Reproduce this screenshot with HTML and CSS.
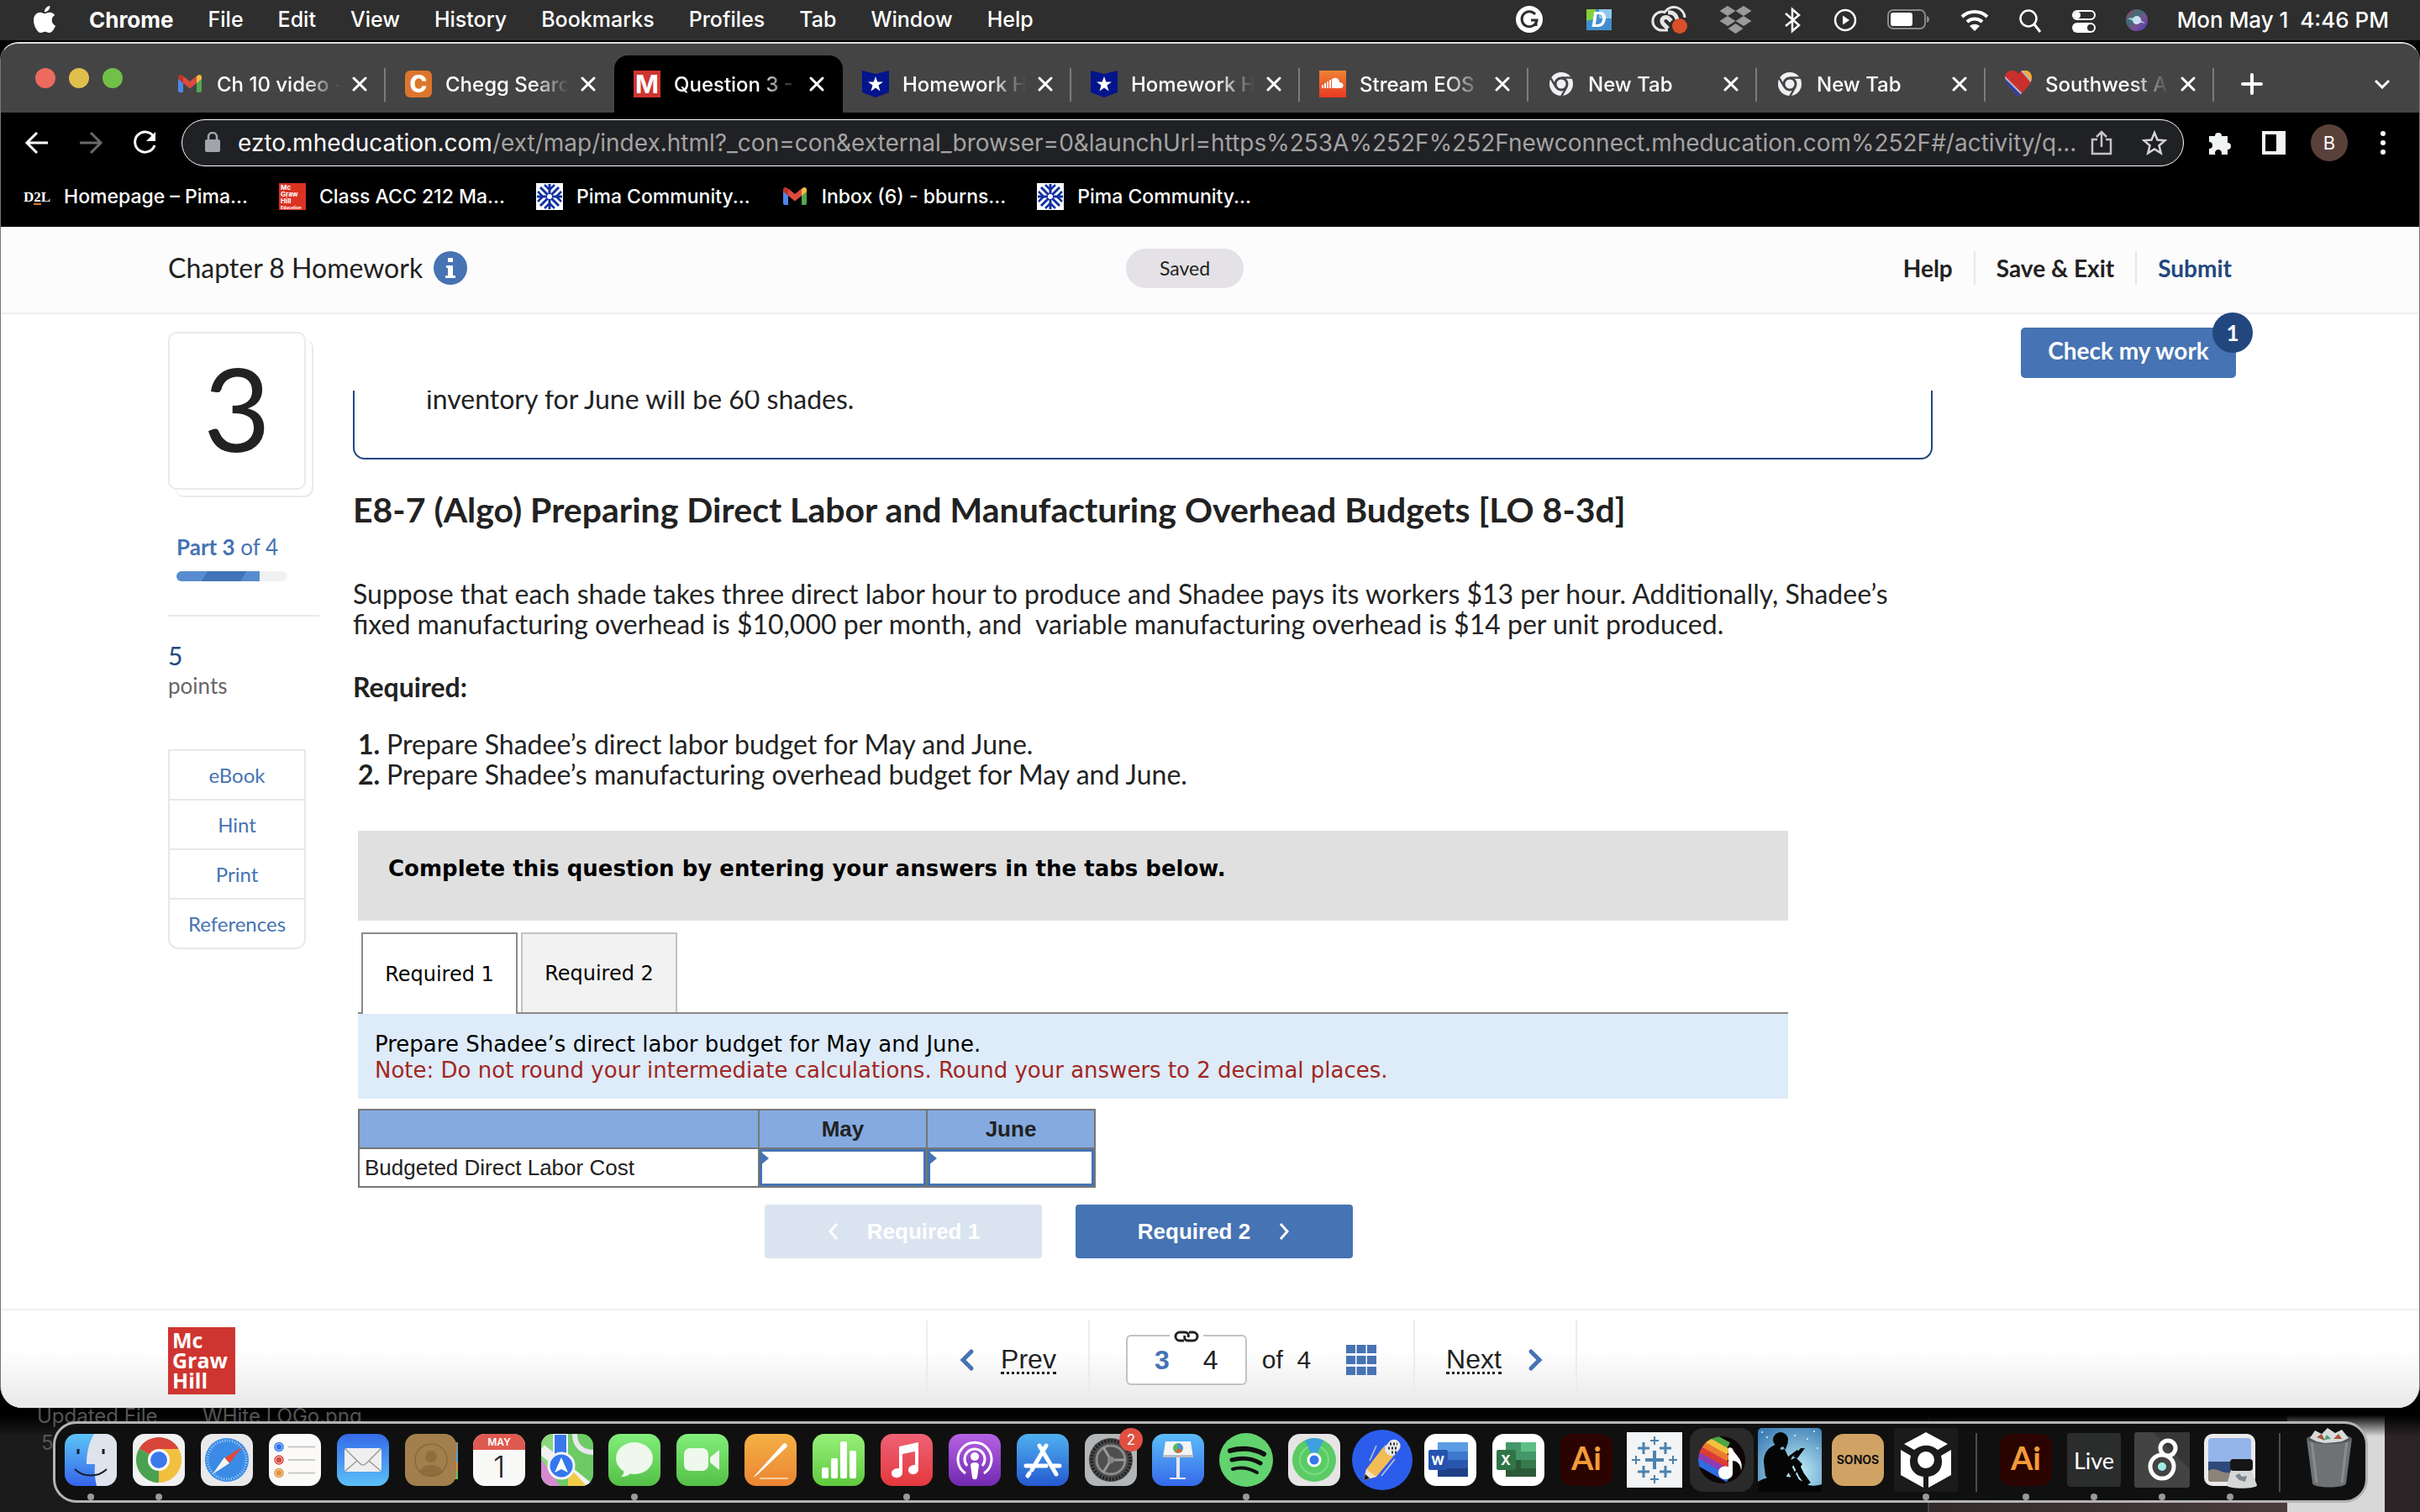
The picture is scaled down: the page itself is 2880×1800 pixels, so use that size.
FILE: index.html
```html
<!DOCTYPE html>
<html lang="en">
<head>
    <meta charset="UTF-8">
    <meta name="viewport" content="width=device-width, initial-scale=1.0">
    <title>Question 3 - Chapter 8 Homework</title>
    <link rel="stylesheet" href="styles.css">
</head>
<body>

    <!-- Shared icons -->
    <svg class="sprite" width="0" height="0" aria-hidden="true">
        <defs>
            <symbol id="close" viewBox="0 0 18 18"><path d="M2 2l14 14M16 2L2 16" stroke="#fff" stroke-width="3" stroke-linecap="round"/></symbol>
            <symbol id="gmail" viewBox="0 0 32 32">
                <path d="M2 8v16a2 2 0 0 0 2 2h4V13z" fill="#4d86ee"/>
                <path d="M30 8v16a2 2 0 0 1-2 2h-4V13z" fill="#54a552"/>
                <path d="M24 7v8l6-5V8c0-3-3-4-5-2z" fill="#f2bd42"/>
                <path d="M8 7v8l-6-5V8c0-3 3-4 5-2z" fill="#b8352a"/>
                <path d="M8 6.500l8 6.500 8-6.500V15l-8 6.500L8 15z" fill="#dc4b3e"/>
            </symbol>
            <symbol id="shield" viewBox="0 0 32 32">
                <path d="M0 0l16 4L32 0v26l-16 6L0 26z" fill="#04148c"/>
                <path d="M16 7l2.300 6.500H25l-5.500 4 2 7L16 20.500l-5.500 4 2-7-5.500-4h6.700z" fill="#fff"/>
            </symbol>
            <symbol id="chrome-grey" viewBox="0 0 32 32">
                <circle cx="16" cy="16" r="14" fill="#eef0f3"/>
                <circle cx="16" cy="16" r="7" fill="none" stroke="#444" stroke-width="3"/>
                <path d="M16 8.500h13M9.500 19.500L3.500 9M22.500 19.500L16 31" stroke="#444" stroke-width="2.500"/>
            </symbol>
            <symbol id="snowflake" viewBox="0 0 32 32">
                <path d="M0 0h32v32H0z" fill="#fff"/>
                <g stroke="#1230a0" stroke-width="3" fill="none">
                    <path d="M16 1v30M1 16h30M5 5l22 22M27 5L5 27"/>
                    <path d="M10 2l6 6 6-6M10 30l6-6 6 6M2 10l6 6-6 6M30 10l-6 6 6 6" stroke-width="2.500"/>
                </g>
                <circle cx="16" cy="16" r="3" fill="#fff"/>
            </symbol>
        </defs>
    </svg>

    <!-- Menu bar -->
    <header class="menubar">
        <nav class="menus">
            <button aria-label="Apple menu"><svg width="32" height="32" viewBox="0 0 24 24" fill="#fff"><path d="M12.152 6.896c-.948 0-2.415-1.078-3.960-1.040-2.040.027-3.910 1.183-4.961 3.014-2.117 3.675-.546 9.103 1.519 12.090 1.013 1.454 2.208 3.090 3.792 3.039 1.520-.065 2.090-.987 3.935-.987 1.831 0 2.350.987 3.960.948 1.637-.026 2.676-1.480 3.676-2.948 1.156-1.688 1.636-3.325 1.662-3.415-.039-.013-3.182-1.221-3.220-4.857-.026-3.040 2.480-4.494 2.597-4.559-1.429-2.090-3.623-2.324-4.390-2.376-2-.156-3.675 1.090-4.610 1.090zM15.530 3.830c.843-1.012 1.400-2.427 1.245-3.830-1.207.052-2.662.805-3.532 1.818-.780.896-1.454 2.338-1.273 3.714 1.338.104 2.715-.688 3.559-1.701"/></svg></button>
            <button class="app-name">Chrome</button>
            <button>File</button>
            <button>Edit</button>
            <button>View</button>
            <button>History</button>
            <button>Bookmarks</button>
            <button>Profiles</button>
            <button>Tab</button>
            <button>Window</button>
            <button>Help</button>
        </nav>
        <div class="status">
            <svg width="42" height="34" viewBox="0 0 42 34"><circle cx="19" cy="17" r="16" fill="#fff"/><path d="M26 11a9 9 0 1 0 2 7h-7M27 18v7" fill="none" stroke="#2e2e2e" stroke-width="3"/></svg>
            <svg width="54" height="34" viewBox="0 0 54 34"><path d="M11 5h30v25H11z" fill="#3f8fd0"/><path d="M26 5h15v11H26z" fill="#8cc8ee"/><path d="M11 5h11v11l-11 3z" fill="#86cf3a"/><text x="17" y="26" font-size="24" font-style="italic" font-weight="700" fill="#fff">D</text></svg>
            <svg width="44" height="34" viewBox="0 0 44 34" fill="none" stroke="#e6e6e6" stroke-width="3"><path d="M20 30H14a11 11 0 1 1 2-21.500A13 13 0 0 1 40 15"/><path d="M20 28l-6-6a4.500 4.500 0 1 1 7-6l3 3M20 9c7-1 10 4 11 8" stroke-width="5"/><circle cx="34" cy="25" r="9" fill="#d94f2a" stroke="none"/></svg>
            <svg width="44" height="34" viewBox="0 0 44 34" fill="#9a9a9a"><path d="M13 1l9.500 6-9.500 6-9.500-6zM32 1l9.500 6-9.500 6-9.500-6zM13 13l9.500 6-9.500 6-9.500-6zM32 13l9.500 6-9.500 6-9.500-6zM22.500 22l9 6-9 6-9-6z"/></svg>
            <svg width="26" height="34" viewBox="0 0 26 34" fill="none" stroke="#fff" stroke-width="2.500"><path d="M4 10l16 14-8 7V5l8 7L4 25"/></svg>
            <svg width="30" height="34" viewBox="0 0 30 34"><circle cx="15" cy="18" r="12" fill="none" stroke="#fff" stroke-width="2.500"/><path d="M12 12.500l8 5.500-8 5.500z" fill="#fff"/></svg>
            <svg width="54" height="34" viewBox="0 0 54 34"><rect x="2" y="6" width="44" height="22" rx="6" fill="none" stroke="#8a8a8a" stroke-width="2"/><rect x="5" y="9" width="26" height="16" rx="3" fill="#fff"/><path d="M48 13c4 1 4 7 0 8z" fill="#8a8a8a"/></svg>
            <svg width="34" height="34" viewBox="0 0 34 34"><g fill="none" stroke="#fff" stroke-width="4"><path d="M2 14a22 22 0 0 1 30 0M8 20a13 13 0 0 1 18 0"/></g><path d="M17 31l-6-6c4-3 8-3 12 0z" fill="#fff"/></svg>
            <svg width="30" height="34" viewBox="0 0 30 34" fill="none" stroke="#fff" stroke-width="2.500"><circle cx="13" cy="16" r="9.500"/><path d="M20 23l7 9" stroke-width="3"/></svg>
            <svg width="30" height="34" viewBox="0 0 30 34"><rect x="2" y="7" width="26" height="10" rx="5" fill="none" stroke="#fff" stroke-width="2"/><circle cx="7" cy="12" r="4" fill="#fff"/><rect x="1" y="21" width="28" height="12" rx="6" fill="#fff"/><circle cx="23" cy="27" r="4" fill="#2e2e2e"/></svg>
            <svg width="28" height="34" viewBox="0 0 28 34">
                <defs><linearGradient id="siri" x1="0" y1="0" x2="1" y2="1"><stop offset="0" stop-color="#b0356e"/><stop offset=".35" stop-color="#3a6f70"/><stop offset=".6" stop-color="#7a4f90"/><stop offset="1" stop-color="#4a3cc8"/></linearGradient></defs>
                <circle cx="14" cy="18" r="13" fill="url(#siri)"/><circle cx="14" cy="18" r="5" fill="#e6f4ff" opacity=".85"/><path d="M3 16c8-2 14 0 21 6-7-2-14-2-21-6z" fill="#b8e4ff" opacity=".8"/>
            </svg>
            <span class="clock">Mon May 1&nbsp; 4:46 PM</span>
        </div>
    </header>

    <!-- Browser window -->
    <div class="window">
        <div class="tabstrip">
            <div class="lights"><button class="red" aria-label="Close"></button><button class="yellow" aria-label="Minimise"></button><button class="green" aria-label="Zoom"></button></div>
            <div class="tab">
                <svg class="favicon"><use href="#gmail"/></svg><span class="tab-title">Ch 10 video -</span>
                <button class="tab-close" aria-label="Close tab"><svg width="18" height="18"><use href="#close"/></svg></button>
            </div>
            <div class="tab no-line">
                <svg class="favicon" viewBox="0 0 32 32"><rect width="32" height="32" rx="6" fill="#dc762c"/><text x="16" y="26" text-anchor="middle" font-size="28" font-weight="800" fill="#fff">C</text></svg><span class="tab-title">Chegg Searc</span>
                <button class="tab-close" aria-label="Close tab"><svg width="18" height="18"><use href="#close"/></svg></button>
            </div>
            <div class="tab active no-line">
                <svg class="favicon" viewBox="0 0 32 32"><path d="M0 0h32v32H0z" fill="#cf3530"/><text x="16" y="27" text-anchor="middle" font-size="30" font-weight="700" fill="#fff">M</text></svg><span class="tab-title">Question 3 -</span>
                <button class="tab-close" aria-label="Close tab"><svg width="18" height="18"><use href="#close"/></svg></button>
            </div>
            <div class="tab">
                <svg class="favicon"><use href="#shield"/></svg><span class="tab-title">Homework H</span>
                <button class="tab-close" aria-label="Close tab"><svg width="18" height="18"><use href="#close"/></svg></button>
            </div>
            <div class="tab">
                <svg class="favicon"><use href="#shield"/></svg><span class="tab-title">Homework H</span>
                <button class="tab-close" aria-label="Close tab"><svg width="18" height="18"><use href="#close"/></svg></button>
            </div>
            <div class="tab">
                <svg class="favicon" viewBox="0 0 32 32"><defs><linearGradient id="sc" x2="0" y2="1"><stop stop-color="#ee8233"/><stop offset="1" stop-color="#ea3a24"/></linearGradient></defs><path d="M0 0h32v32H0z" fill="url(#sc)"/><path d="M4 17v4M7 15v6M10 13v8M13 11v10" stroke="#fff" stroke-width="2"/><path d="M15 10c5-3 9 0 9 4 6 0 6 7 1 7H15z" fill="#fff"/></svg><span class="tab-title">Stream EOS</span>
                <button class="tab-close" aria-label="Close tab"><svg width="18" height="18"><use href="#close"/></svg></button>
            </div>
            <div class="tab">
                <svg class="favicon"><use href="#chrome-grey"/></svg><span class="tab-title">New Tab</span>
                <button class="tab-close" aria-label="Close tab"><svg width="18" height="18"><use href="#close"/></svg></button>
            </div>
            <div class="tab">
                <svg class="favicon"><use href="#chrome-grey"/></svg><span class="tab-title">New Tab</span>
                <button class="tab-close" aria-label="Close tab"><svg width="18" height="18"><use href="#close"/></svg></button>
            </div>
            <div class="tab">
                <svg class="favicon" viewBox="0 0 32 32"><defs><clipPath id="heart"><path d="M16 31C8 23 0 16 0 8 0-1 12-3 16 4c4-7 16-5 16 4 0 8-8 15-16 23z"/></clipPath></defs><g clip-path="url(#heart)"><path d="M0 0h32v32H0z" fill="#c9302c"/><path d="M18-2h14v18z" fill="#f2ae3d"/><path d="M0 8l22 22H0z" fill="#2c3fa8"/><path d="M17-3l20 22M-2 6l22 22" stroke="#b9b4bd" stroke-width="2"/></g></svg><span class="tab-title">Southwest A</span>
                <button class="tab-close" aria-label="Close tab"><svg width="18" height="18"><use href="#close"/></svg></button>
            </div>
            <button class="new-tab" aria-label="New tab"><svg width="26" height="26" viewBox="0 0 26 26"><path d="M13 2v22M2 13h22" stroke="#fff" stroke-width="4" stroke-linecap="round"/></svg></button>
            <button class="tab-list" aria-label="Search tabs"><svg width="20" height="12" viewBox="0 0 20 12" fill="none" stroke="#fff" stroke-width="3"><path d="M2 2l8 8 8-8"/></svg></button>
        </div>

        <div class="toolbar">
            <button aria-label="Back"><svg width="32" height="32" viewBox="0 0 32 32" fill="none" stroke="#fff" stroke-width="3"><path d="M29 16H5M16 4L4 16l12 12"/></svg></button>
            <button aria-label="Forward"><svg width="32" height="32" viewBox="0 0 32 32" fill="none" stroke="#6a6a6a" stroke-width="3"><path d="M3 16h24M16 4l12 12-12 12"/></svg></button>
            <button aria-label="Reload"><svg width="32" height="32" viewBox="0 0 32 32" fill="none" stroke="#fff" stroke-width="3"><path d="M27 9a12 12 0 1 0 1 10"/><path d="M29 3v11H18z" fill="#fff" stroke="none"/></svg></button>
            <div class="omnibox">
                <svg width="20" height="26" viewBox="0 0 20 26"><rect x="1" y="9" width="18" height="15" rx="2" fill="#9fa5aa"/><path d="M5 10V6a5 5 0 0 1 10 0v4" fill="none" stroke="#9fa5aa" stroke-width="2.500"/></svg>
                <a href="#" class="url">ezto.mheducation.com<span>/ext/map/index.html?_con=con&amp;external_browser=0&amp;launchUrl=https%253A%252F%252Fnewconnect.mheducation.com%252F#/activity/q...</span></a>
                <button aria-label="Share"><svg width="28" height="32" viewBox="0 0 28 32" fill="none" stroke="#c4c4c4" stroke-width="2.500"><path d="M9 12H3v17h22V12h-6M14 21V4M8 9l6-6 6 6"/></svg></button>
                <button aria-label="Bookmark"><svg width="30" height="32" viewBox="0 0 30 32" fill="none" stroke="#d4d4d4" stroke-width="2.500"><path d="M15 4l3.500 8.500 9 .8-7 6 2.200 9L15 23.500 7.300 28.300l2.200-9-7-6 9-.8z"/></svg></button>
            </div>
            <button aria-label="Extensions"><svg width="32" height="32" viewBox="0 0 32 32" fill="#f1f3f4"><path d="M3 8h7a4 4 0 1 1 8 0h7v8a4 4 0 1 1 0 8v6h-7.500a4 4 0 1 0-7 0H3v-7a4 4 0 1 0 0-8z"/></svg></button>
            <button aria-label="Side panel"><svg width="32" height="32" viewBox="0 0 32 32"><path d="M4 4h24v24H4z" fill="none" stroke="#f1f3f4" stroke-width="4"/><path d="M19 4h9v24h-9z" fill="#f1f3f4"/></svg></button>
            <button class="avatar" aria-label="Profile">B</button>
            <button aria-label="Menu"><svg width="12" height="32" viewBox="0 0 12 32" fill="#fff"><circle cx="6" cy="5" r="3"/><circle cx="6" cy="16" r="3"/><circle cx="6" cy="27" r="3"/></svg></button>
        </div>

        <nav class="bookmarks">
            <a href="#"><svg class="favicon" viewBox="0 0 32 32"><text class="serif" x="0" y="22" font-size="17" font-weight="700" fill="#fff">D2L</text><path d="M12 25h9" stroke="#d97a34" stroke-width="2"/></svg>Homepage – Pima...</a>
            <a href="#"><svg class="favicon" viewBox="0 0 32 32"><path d="M0 0h32v32H0z" fill="#dc3222"/><g fill="#fff" font-size="8" font-weight="700"><text x="2" y="8">Mc</text><text x="2" y="16">Graw</text><text x="2" y="24">Hill</text><text x="2" y="31" font-size="5">Education</text></g></svg>Class ACC 212 Ma...</a>
            <a href="#"><svg class="favicon"><use href="#snowflake"/></svg>Pima Community...</a>
            <a href="#"><svg class="favicon"><use href="#gmail"/></svg>Inbox (6) - bburns...</a>
            <a href="#"><svg class="favicon"><use href="#snowflake"/></svg>Pima Community...</a>
        </nav>

        <!-- Assignment page -->
        <div class="page">
            <header class="page-header">
                <h1>Chapter 8 Homework <button class="info" aria-label="Assignment info"><svg width="40" height="40" viewBox="0 0 40 40"><circle cx="20" cy="20" r="20" fill="#4673b3"/><path d="M17 8h6v5h-6zM15 17h8v12h3v3H14v-3h3v-9h-2z" fill="#fff"/></svg></button></h1>
                <span class="saved">Saved</span>
                <nav class="page-links">
                    <a href="#">Help</a>
                    <a href="#">Save &amp; Exit</a>
                    <a href="#" class="submit">Submit</a>
                </nav>
            </header>

            <div class="content">
                <aside class="sidebar">
                    <div class="question-number">3</div>
                    <div class="part">
                        <p><strong>Part 3</strong> of 4</p>
                        <div class="progress"><div class="progress-fill" style="width: 75%"></div></div>
                    </div>
                    <p class="score">5</p>
                    <p class="points">points</p>
                    <nav class="resources">
                        <a href="#">eBook</a>
                        <a href="#">Hint</a>
                        <a href="#">Print</a>
                        <a href="#">References</a>
                    </nav>
                </aside>

                <main class="question">
                    <div class="scenario">inventory for June will be 60 shades.</div>
                    <h2>E8-7 (Algo) Preparing Direct Labor and Manufacturing Overhead Budgets [LO 8-3d]</h2>
                    <p class="prompt">Suppose that each shade takes three direct labor hour to produce and Shadee pays its workers $13 per hour. Additionally, Shadee’s<br>fixed manufacturing overhead is $10,000 per month, and&nbsp; variable manufacturing overhead is $14 per unit produced.</p>
                    <p class="required">Required:</p>
                    <ol>
                        <li>Prepare Shadee’s direct labor budget for May and June.</li>
                        <li>Prepare Shadee’s manufacturing overhead budget for May and June.</li>
                    </ol>

                    <section class="answer">
                        <div class="instructions">Complete this question by entering your answers in the tabs below.</div>
                        <div class="answer-tabs">
                            <button class="current">Required 1</button>
                            <button>Required 2</button>
                        </div>
                        <div class="note">
                            <p>Prepare Shadee’s direct labor budget for May and June.</p>
                            <p class="warning">Note: Do not round your intermediate calculations. Round your answers to 2 decimal places.</p>
                        </div>
                        <table>
                            <thead>
                                <tr><th class="label-col"></th><th id="may">May</th><th id="june">June</th></tr>
                            </thead>
                            <tbody>
                                <tr>
                                    <td id="cost">Budgeted Direct Labor Cost</td>
                                    <td class="entry"><input type="text" aria-labelledby="cost may"></td>
                                    <td class="entry"><input type="text" aria-labelledby="cost june"></td>
                                </tr>
                            </tbody>
                        </table>
                        <div class="answer-nav">
                            <button class="previous"><svg width="16" height="22" viewBox="0 0 16 22" fill="none" stroke="#fff" stroke-width="3"><path d="M12 2L4 11l8 9"/></svg>Required 1</button>
                            <button>Required 2<svg width="16" height="22" viewBox="0 0 16 22" fill="none" stroke="#fff" stroke-width="3"><path d="M4 2l8 9-8 9"/></svg></button>
                        </div>
                    </section>
                </main>

                <div class="check"><button>Check my work</button><span class="badge">1</span></div>
            </div>

            <footer class="page-footer">
                <div class="logo">Mc<br>Graw<br>Hill</div>
                <nav class="pager">
                    <a href="#" class="step"><svg width="20" height="28" viewBox="0 0 20 28" fill="none" stroke="#4673b3" stroke-width="5" stroke-linecap="round"><path d="M15 4L5 14l10 10"/></svg><span>Prev</span></a>
                    <div class="position">
                        <div class="linked"><svg class="chain" width="40" height="20" viewBox="0 0 40 20" fill="none" stroke="#222" stroke-width="3"><path d="M17 15h-5a5 5 0 0 1 0-10h6c4 0 5 3 4 6M23 5h5a5 5 0 0 1 0 10h-6c-4 0-5-3-4-6"/></svg><b>3</b><span>4</span></div>
                        <span class="of">of&nbsp; 4</span>
                        <button aria-label="All questions"><svg width="36" height="36" viewBox="0 0 36 36" fill="#4673b3"><path d="M0 0h11v10H0zM12.500 0h11v10h-11zM25 0h11v10H25zM0 13h11v10H0zM12.500 13h11v10h-11zM25 13h11v10H25zM0 26h11v10H0zM12.500 26h11v10h-11zM25 26h11v10H25z"/></svg></button>
                    </div>
                    <a href="#" class="step"><span>Next</span><svg width="20" height="28" viewBox="0 0 20 28" fill="none" stroke="#4673b3" stroke-width="5" stroke-linecap="round"><path d="M5 4l10 10L5 24"/></svg></a>
                </nav>
            </footer>
        </div>
    </div>

    <!-- Desktop and dock -->
    <div class="desktop">
        <span class="file file-one">Updated File</span>
        <span class="file file-two">WHite LOGo.png</span>
        <span class="file file-count">5</span>
        <nav class="dock">
            <button class="running" aria-label="Finder"><svg viewBox="-7 -7 76 76">
                <defs><linearGradient id="finder" x2="0" y2="1"><stop stop-color="#5cc4f7"/><stop offset="1" stop-color="#3565ea"/></linearGradient><clipPath id="tile"><rect width="62" height="62" rx="14"/></clipPath></defs>
                <g clip-path="url(#tile)"><path d="M0 0h62v62H0z" fill="url(#finder)"/><path d="M35 0c-7 12-9 24-9 36h10c-1 10 0 18 2 26h24V0z" fill="#dfe4ec"/></g>
                <path d="M16 18v6M46 18v6" stroke="#16202e" stroke-width="3"/><path d="M12 42c10 10 28 10 38 0" fill="none" stroke="#16202e" stroke-width="2"/></svg></button>
            <button class="running" aria-label="Chrome"><svg viewBox="-7 -7 76 76"><rect width="62" height="62" rx="14" fill="#f1f1f1"/>
                <path d="M31 31L7.600 17.500A27 27 0 0 1 54.400 17.500z" fill="#d8453a"/><path d="M31 31l23.400-13.500A27 27 0 0 1 31 58z" fill="#f2c03f"/><path d="M31 31V58A27 27 0 0 1 7.600 17.500z" fill="#4ba152"/><path d="M31 18h24l-13 19-11 21 4-14z" fill="#f2c03f"/><circle cx="31" cy="31" r="13" fill="#fff"/><circle cx="31" cy="31" r="10" fill="#3c79ea"/></svg></button>
            <button aria-label="Safari"><svg viewBox="-7 -7 76 76"><rect width="62" height="62" rx="14" fill="#e9e9ea"/><circle cx="31" cy="31" r="26" fill="#3b8be6"/><circle cx="31" cy="31" r="23" fill="none" stroke="#a9d2f7" stroke-width="3" stroke-dasharray="1 2"/><path d="M50 15L34 35l-6-6z" fill="#e4483c"/><path d="M28 28l6 7-20 13z" fill="#f5f5f5"/></svg></button>
            <button aria-label="Reminders"><svg viewBox="-7 -7 76 76"><rect width="62" height="62" rx="14" fill="#fbfaf9"/><path d="M23 15.500h32M23 31h32M23 46.500h32" stroke="#c9c9c9" stroke-width="2"/><g stroke-width="1.500" fill="none"><circle cx="12" cy="15.500" r="5" stroke="#2f74ea"/><circle cx="12" cy="31" r="5" stroke="#d8483e"/><circle cx="12" cy="46.500" r="5" stroke="#e09338"/></g><circle cx="12" cy="15.500" r="3.500" fill="#2f74ea"/><circle cx="12" cy="31" r="3.500" fill="#d8483e"/><circle cx="12" cy="46.500" r="3.500" fill="#e09338"/></svg></button>
            <button aria-label="Mail"><svg viewBox="-7 -7 76 76"><defs><linearGradient id="mail" x2="0" y2="1"><stop stop-color="#356be8"/><stop offset="1" stop-color="#5bc0f8"/></linearGradient></defs><rect width="62" height="62" rx="14" fill="url(#mail)"/><rect x="9" y="17" width="44" height="28" rx="3" fill="#efefef"/><path d="M10 18l17 17c3 3 5 3 8 0l17-17M10 44l14-12M52 44L38 32" fill="none" stroke="#9b9b9b" stroke-width="1.500"/></svg></button>
            <button aria-label="Contacts"><svg viewBox="-7 -7 76 76"><path d="M58 10h5v14h-5z" fill="#8c8c8c"/><path d="M58 22h5v12h-5z" fill="#4ea4e4"/><path d="M58 34h5v10h-5z" fill="#e88b35"/><path d="M58 44h5v10h-5z" fill="#63c35a"/><rect width="61" height="62" rx="14" fill="#a27f4c"/><g fill="#8f6e3e"><circle cx="31" cy="27" r="7"/><path d="M17 46c3-12 25-12 28 0-8 7-20 7-28 0z"/></g><circle cx="31" cy="31" r="19" fill="none" stroke="#8a693b" stroke-width="1.500"/></svg></button>
            <button aria-label="Calendar"><svg viewBox="-7 -7 76 76"><g clip-path="url(#tile)"><path d="M0 0h62v62H0z" fill="#f8f8f6"/><path d="M0 0h62v19H0z" fill="#de5a50"/></g><text x="31" y="14" text-anchor="middle" font-size="12" font-weight="600" fill="#fff">MAY</text><text x="31" y="52" text-anchor="middle" font-size="36" font-weight="300" fill="#222">1</text></svg></button>
            <button aria-label="Maps"><svg viewBox="-7 -7 76 76"><g clip-path="url(#tile)"><path d="M0 0h62v62H0z" fill="#6dcb66"/><path d="M0 0h14v62H0z" fill="#8bd77c"/><path d="M0 30l24 34H0z" fill="#d58ad0"/><path d="M0 18l62 50" stroke="#f1f0f3" stroke-width="12"/><path d="M32 62V38l22 24z" fill="#f0cc47"/><path d="M40 0c0 14 8 22 24 22" fill="none" stroke="#e8e8ee" stroke-width="6"/><path d="M15 0h16v40H15z" fill="#3a78ea" stroke="#fff" stroke-width="2"/></g><circle cx="24" cy="38" r="15" fill="#3577ec" stroke="#f4f4f6" stroke-width="3"/><path d="M24 28l8 18-8-4-8 4z" fill="#fff"/></svg></button>
            <button class="running" aria-label="Messages"><svg viewBox="-7 -7 76 76"><defs><linearGradient id="green" x2="0" y2="1"><stop stop-color="#82ee7b"/><stop offset="1" stop-color="#55c047"/></linearGradient></defs><rect width="62" height="62" rx="14" fill="url(#green)"/><ellipse cx="31" cy="29" rx="22" ry="19" fill="#eef8ec"/><path d="M18 42c1 4 0 7-3 9 6 0 10-2 12-5z" fill="#eef8ec"/></svg></button>
            <button aria-label="FaceTime"><svg viewBox="-7 -7 76 76"><rect width="62" height="62" rx="14" fill="url(#green)"/><rect x="9" y="17" width="29" height="27" rx="7" fill="#eef8ec"/><path d="M40 28l11-9v24l-11-9z" fill="#eef8ec"/></svg></button>
            <button aria-label="Pages"><svg viewBox="-7 -7 76 76"><defs><linearGradient id="pages" x2="0" y2="1"><stop stop-color="#f4b145"/><stop offset="1" stop-color="#ec8433"/></linearGradient></defs><rect width="62" height="62" rx="14" fill="url(#pages)"/><path d="M10 52L46 12c3-2 6 1 4 4L15 49z" fill="#fff"/><path d="M18 53h34" stroke="#f9cfa0" stroke-width="2"/></svg></button>
            <button aria-label="Numbers"><svg viewBox="-7 -7 76 76"><defs><linearGradient id="numbers" x2="0" y2="1"><stop stop-color="#98f07a"/><stop offset="1" stop-color="#5fc93f"/></linearGradient></defs><rect width="62" height="62" rx="14" fill="url(#numbers)"/><g fill="#fff"><rect x="11" y="40" width="8" height="13" rx="2"/><rect x="22" y="29" width="8" height="24" rx="2"/><rect x="33" y="9" width="8" height="44" rx="2"/><rect x="44" y="20" width="8" height="33" rx="2"/></g></svg></button>
            <button class="running" aria-label="Music"><svg viewBox="-7 -7 76 76"><defs><linearGradient id="music" x2="0" y2="1"><stop stop-color="#ee6275"/><stop offset="1" stop-color="#e4383d"/></linearGradient></defs><rect width="62" height="62" rx="14" fill="url(#music)"/><path d="M22 15l23-5v10l-19 4v22c0 8-13 8-13 1 0-5 5-6 9-6zM41 20h4v22c0 8-12 8-12 1 0-5 5-6 8-6z" fill="#fff"/></svg></button>
            <button aria-label="Podcasts"><svg viewBox="-7 -7 76 76"><defs><linearGradient id="pod" x2="0" y2="1"><stop stop-color="#b562e4"/><stop offset="1" stop-color="#7129b0"/></linearGradient></defs><rect width="62" height="62" rx="14" fill="url(#pod)"/><g fill="none" stroke="#fff" stroke-width="3"><path d="M20 47a20 20 0 1 1 22 0"/><path d="M22 38a12 12 0 1 1 18 0"/></g><circle cx="31" cy="27" r="5" fill="#fff"/><path d="M26 37c0-4 10-4 10 0l-2 15c-1 3-5 3-6 0z" fill="#fff"/></svg></button>
            <button aria-label="App Store"><svg viewBox="-7 -7 76 76"><defs><linearGradient id="store" x2="0" y2="1"><stop stop-color="#4fb0f0"/><stop offset="1" stop-color="#2559d0"/></linearGradient></defs><rect width="62" height="62" rx="14" fill="url(#store)"/><path d="M35 14L18 43M27 14l20 34M11 38h24M42 38h9M15 47l-2 3" stroke="#fff" stroke-width="5" stroke-linecap="round"/></svg></button>
            <button aria-label="System Settings"><svg viewBox="-7 -7 76 76"><rect width="62" height="62" rx="14" fill="#b2b6b8"/><circle cx="31" cy="31" r="26" fill="#4a4a4a"/><circle cx="31" cy="31" r="23" fill="none" stroke="#1f1f1f" stroke-width="4" stroke-dasharray="2 2"/><circle cx="31" cy="31" r="17" fill="#4f4f4f" stroke="#8c8c8c" stroke-width="3"/><path d="M31 31h18M31 31l-9-15M31 31l-9 15" stroke="#9a9a9a" stroke-width="3"/><circle cx="31" cy="31" r="4" fill="#888"/></svg><span class="notice">2</span></button>
            <button aria-label="Keynote"><svg viewBox="-7 -7 76 76"><defs><linearGradient id="key" x2="0" y2="1"><stop stop-color="#5bbdf8"/><stop offset="1" stop-color="#3569ea"/></linearGradient></defs><rect width="62" height="62" rx="14" fill="url(#key)"/><path d="M29 28h4v24h7v2H21v-2h8z" fill="#e8e8ea"/><path d="M16 9h30l3 19H13z" fill="#f4f4f4"/><path d="M13 25h36v3H13z" fill="#b9bcc4"/><circle cx="31" cy="17" r="6" fill="#54b560"/><path d="M31 11a6 6 0 0 1 5 9l-5-3z" fill="#4a8ee0"/><path d="M31 17l5 3a6 6 0 0 1-8 2z" fill="#e0603a"/></svg></button>
            <button class="running" aria-label="Spotify"><svg viewBox="-7 -7 76 76"><circle cx="31" cy="31" r="32" fill="#62d36e"/><g fill="none" stroke="#101010" stroke-linecap="round"><path d="M12 20c13-4 28-3 40 4" stroke-width="6"/><path d="M14 31c12-3 24-2 34 4" stroke-width="5"/><path d="M15 42c10-3 20-1 29 4" stroke-width="4"/></g></svg></button>
            <button aria-label="Find My"><svg viewBox="-7 -7 76 76"><rect width="62" height="62" rx="14" fill="#e6e4e5"/><circle cx="31" cy="31" r="26" fill="#5bcb66"/><circle cx="31" cy="31" r="17" fill="none" stroke="#7ade82" stroke-width="2"/><path d="M31 31L20 8c7-4 15-4 22 0z" fill="#3fa0e0"/><circle cx="31" cy="31" r="7" fill="#3577ec" stroke="#fff" stroke-width="3"/></svg></button>
            <button aria-label="Notability"><svg viewBox="-7 -7 76 76"><circle cx="31" cy="31" r="36" fill="#2c5cec"/><path d="M12 42l20-26 12 11-20 24-15 4z" fill="#f2bd54"/><path d="M12 42l12 9-15 4z" fill="#f3e2c8"/><path d="M9 55l2-7 5 5z" fill="#151515"/><path d="M32 16l12 11 3-3-12-11z" fill="#b9bcc4"/><rect x="36" y="6" width="15" height="20" rx="7" fill="#e8e8e8" transform="rotate(38 43 16)"/><path d="M40 12h9M38 17h12M42 22h6" stroke="#333" stroke-width="3" stroke-dasharray="2 2"/><path d="M24 14L16 32M46 30L30 50" stroke="#c6c9cf" stroke-width="1.500"/></svg></button>
            <button aria-label="Word"><svg viewBox="-7 -7 76 76"><rect width="62" height="62" rx="14" fill="#fff"/><path d="M16 10h36v11H16z" fill="#5a9de4"/><path d="M16 21h36v10H16z" fill="#3d79cc"/><path d="M16 31h36v10H16z" fill="#2a57ae"/><path d="M16 41h36v10H16z" fill="#1f3f88"/><rect x="5" y="19" width="23" height="24" rx="2" fill="#2553ae"/><text x="16" y="37" text-anchor="middle" font-size="15" font-weight="700" fill="#fff">W</text></svg></button>
            <button aria-label="Excel"><svg viewBox="-7 -7 76 76"><rect width="62" height="62" rx="14" fill="#fff"/><path d="M16 10h36v41H16z" fill="#44976a"/><path d="M34 10h18v11H34z" fill="#5fbd86"/><path d="M16 31h18v20H16z" fill="#2c5a38"/><path d="M34 31h18v10H34z" fill="#357a4c"/><path d="M34 41h18v10H34z" fill="#2c5a38"/><rect x="5" y="19" width="23" height="24" rx="2" fill="#2f7546"/><text x="16" y="37" text-anchor="middle" font-size="16" font-weight="700" fill="#fff">X</text></svg></button>
            <button aria-label="Illustrator"><svg viewBox="-7 -7 76 76"><rect width="62" height="62" rx="14" fill="#2b0300"/><text x="31" y="43" text-anchor="middle" font-size="38" font-weight="700" fill="#f39c38" class="ai">Ai</text></svg></button>
            <button aria-label="Tableau"><svg viewBox="-7 -7 76 76"><path d="M-2-2h66v66H-2z" fill="#f2f4f5"/><g stroke="#4c82ae" fill="none"><path d="M31 20v22M20 31h22" stroke-width="4"/><path d="M18 10v14M11 17h14M44 10v14M37 17h14M18 38v14M11 45h14M44 38v14M37 45h14" stroke-width="3"/><path d="M31 3v10M26 8h10M31 49v10M26 54h10M9 26v10M4 31h10M53 26v10M48 31h10" stroke-width="2"/></g></svg></button>
            <button aria-label="djay"><svg viewBox="-7 -7 76 76"><defs><clipPath id="disc"><circle cx="31" cy="31" r="28"/></clipPath></defs><rect x="-7" y="-7" width="76" height="76" rx="16" fill="#2a2a2a"/>
                <g clip-path="url(#disc)"><path d="M0 0h62v62H0z" fill="#0d0505"/><g stroke-width="8"><path d="M0-8l39 22" stroke="#4da644"/><path d="M0 0l39 22" stroke="#f1c23c"/><path d="M0 8l39 22" stroke="#ec7a30"/><path d="M0 16l39 22" stroke="#dc3b36"/><path d="M0 24l39 22" stroke="#8c3db0"/><path d="M0 32l39 22" stroke="#2f6ce0"/></g></g>
                <path d="M39 17c0-1 4-1 5 1 2 7 14 12 10 26 0-8-5-12-10-12v15c0 9-17 10-17-1 0-6 6-9 12-7z" fill="#fff"/></svg></button>
            <button aria-label="Kindle"><svg viewBox="-7 -7 76 76"><defs><radialGradient id="kindle" cx=".6" cy=".7" r=".8"><stop stop-color="#c5f3fb"/><stop offset="1" stop-color="#3f7fb6"/></radialGradient></defs><rect x="-7" y="-7" width="76" height="76" rx="5" fill="url(#kindle)"/>
                <g fill="#050505"><path d="M-7 57c16-10 44-9 60 4 5 1 10 1 16-1v5q0 4-4 4H-3q-4 0-4-4z"/><circle cx="20" cy="7" r="9"/><path d="M20 10h9l-3 8-6 1zM16 12c-12 4-16 12-16 22l2 16 6 8h14l14-22 4 5-11 15h3l14-20-8-8-6 3 2-4 8-5-2-3-11 8-6-13z"/></g>
                <path d="M38 35l7 14 8 11M29 38l6 11 5 9" stroke="#050505" stroke-width="7" fill="none"/><path d="M35 27l9-10h5l-9 12z" fill="#050505"/>
                <g fill="#e4f6ff"><circle cx="-2" cy="-2" r="1"/><circle cx="4" cy="4" r="1"/><circle cx="37" cy="2" r="1"/><circle cx="52" cy="6" r="1"/><circle cx="60" cy="-3" r="1"/><circle cx="64" cy="17" r="1"/></g></svg></button>
            <button aria-label="Sonos"><svg viewBox="-7 -7 76 76"><rect width="62" height="62" rx="14" fill="#d0a364"/><text x="31" y="36" text-anchor="middle" font-size="14" font-weight="700" fill="#111">SONOS</text></svg></button>
            <button class="running" aria-label="Audio cube"><svg viewBox="-7 -7 76 76"><rect x="-7" y="-7" width="76" height="76" rx="4" fill="#1b1b1b"/>
                <path d="M31-2l26 14-12 7c-8-7-20-7-28 0L5 12zM1 19l12 7c-4 14 4 24 15 25v13L1 49zM61 19l-12 7c4 14-4 24-15 25v13l27-15z" fill="#fff"/><circle cx="31" cy="31" r="10" fill="#fff"/></svg></button>
            <span class="divider"></span>
            <button class="running" aria-label="Illustrator document"><svg viewBox="-7 -7 76 76"><rect width="62" height="62" rx="14" fill="#2b0300"/><text x="31" y="43" text-anchor="middle" font-size="38" font-weight="700" fill="#f39c38" class="ai">Ai</text></svg></button>
            <button class="running" aria-label="Live"><svg viewBox="-7 -7 76 76"><rect x="-1" y="-1" width="64" height="64" rx="4" fill="#2b2d2d"/><text x="31" y="42" text-anchor="middle" font-size="27" fill="#fff" class="ai">Live</text></svg></button>
            <button class="running" aria-label="Eight"><svg viewBox="-7 -7 76 76"><rect x="-2" y="-2" width="66" height="66" rx="3" fill="#434343"/><path d="M20-2L64 42V-2z" fill="#363636"/><g fill="none" stroke="#fff" stroke-width="5"><circle cx="38" cy="17" r="9"/><circle cx="31" cy="39" r="14"/></g><circle cx="31" cy="39" r="5" fill="#9eeee6"/></svg></button>
            <button class="running" aria-label="Preview"><svg viewBox="-7 -7 76 76"><rect width="61" height="62" rx="10" fill="#ece9ea"/><path d="M5 9q0-4 4-4h43q4 0 4 4v24H5z" fill="#93b5ea"/><path d="M5 33h51v24H9q-4 0-4-4z" fill="#2e4a7a"/><path d="M5 44c10-6 14 4 26 2v11H9q-4 0-4-4z" fill="#8d8378"/><path d="M32 43h24l7 18c0 5-36 5-36 0z" fill="#d6d8d8"/><rect x="31" y="30" width="27" height="14" rx="4" fill="#161616"/><path d="M37 50l5-3 3 4 6-1-2 7-7-2z" fill="#7d868d"/></svg></button>
            <span class="divider"></span>
            <button aria-label="Trash"><svg viewBox="-7 -7 76 76"><path d="M4 5l54 0-7 54c-1 6-39 6-40 0z" fill="#6e7274"/><path d="M10 8l6 50M52 8l-6 50" stroke="#9a9ea0" stroke-width="3" opacity=".6"/><ellipse cx="31" cy="6" rx="27" ry="6" fill="#55595b"/><path d="M8 5l6-9 8 4 7-7 9 6 8-4 8 10-8 4-8 1-12 1-10-2z" fill="#d9dada"/><path d="M16 4l6-4 4 8zM36 6l6-6 4 6z" fill="#a5543a"/><path d="M28 1l5 5-8 1z" fill="#47a07c"/></svg></button>
        </nav>
    </div>

</body>
</html>
```
FILE: styles.css
```css
* {
    margin: 0;
    padding: 0;
    box-sizing: border-box;
}

body {
    display: flex;
    flex-direction: column;
    min-height: 100vh;
    background-color: #000;
    color: #222;
    font-family: Inter, "Liberation Sans", sans-serif;
    font-size: 24px;
}

button {
    border: none;
    background: none;
    color: inherit;
    font: inherit;
}

a {
    color: inherit;
    text-decoration: none;
}

svg {
    display: block;
    flex: none;
}

.sprite {
    position: absolute;
}

/* Menu bar */
.menubar {
    display: flex;
    justify-content: space-between;
    align-items: center;
    height: 48px;
    padding: 0 37px 2px;
    background-color: #2e2e2e;
    color: #fff;
    font-size: 25px;
    font-weight: 500;
}

.menus {
    display: flex;
    align-items: center;
    gap: 41px;
}

.menus .app-name {
    margin-left: -4px;
    font-size: 26px;
    font-weight: 700;
}

.status {
    display: flex;
    align-items: center;
    gap: 34px;
}

.clock {
    font-size: 26px;
    white-space: pre;
}

/* Window */
.window {
    display: flex;
    flex-direction: column;
    flex: 1;
    margin-top: 2px;
    border: 1px solid #777;
    border-top: 2px solid #ddd;
    border-bottom: none;
    border-radius: 22px 22px 26px 26px;
    overflow: hidden;
    position: relative;
    z-index: 1;
}

.tabstrip {
    display: flex;
    height: 82px;
    padding-top: 14px;
    background-color: #444;
    color: #fff;
}

.lights {
    display: flex;
    gap: 16px;
    width: 186px;
    padding: 15px 0 0 41px;
}

.lights button {
    width: 24px;
    height: 24px;
    border-radius: 50%;
}

.red { background-color: #ec6a5e; }
.yellow { background-color: #e0c04c; }
.green { background-color: #71c048; }

.tab {
    display: flex;
    align-items: center;
    flex: 0 1 272px;
    min-width: 0;
    padding: 0 22px 0 23px;
    position: relative;
}

.tab::after {
    content: "";
    position: absolute;
    right: 0;
    top: 15px;
    width: 2px;
    height: 40px;
    background-color: #7c7c7c;
}

.tab.no-line::after {
    display: none;
}

.tab.active {
    background-color: #000;
    border-radius: 16px 16px 0 0;
}

.favicon {
    width: 32px;
    height: 32px;
}

.tab-title {
    flex: 1;
    min-width: 0;
    margin: 0 14px 0 16px;
    overflow: hidden;
    white-space: nowrap;
    font-weight: 500;
    -webkit-mask-image: linear-gradient(to right, #000 70%, transparent);
    mask-image: linear-gradient(to right, #000 70%, transparent);
}

.new-tab {
    margin-left: 32px;
}

.tab-list {
    margin: 0 34px 0 auto;
}

/* Toolbar */
.toolbar {
    display: flex;
    align-items: center;
    gap: 32px;
    height: 72px;
    padding: 0 37px 0 27px;
    background-color: #000;
}

.omnibox {
    display: flex;
    align-items: center;
    flex: 1;
    min-width: 0;
    height: 56px;
    margin: 0 -5px 0 -4px;
    padding: 0 19px 0 26px;
    border: 1px solid #fff;
    border-radius: 28px;
    background-color: #202124;
}

.url {
    flex: 1;
    min-width: 0;
    margin: 0 8px 0 20px;
    overflow: hidden;
    white-space: nowrap;
    color: #fff;
    font-size: 28px;
}

.url span {
    color: #a3a3a3;
}

.omnibox button + button {
    margin-left: 34px;
}

.avatar {
    width: 44px;
    height: 44px;
    margin: 0 4px 0 -4px;
    border-radius: 50%;
    background-color: #59413a;
    color: #fff;
    font-size: 22px;
}

.bookmarks {
    display: flex;
    gap: 37px;
    height: 64px;
    padding: 0 27px 8px;
    background-color: #000;
    color: #fff;
    font-size: 23px;
    font-weight: 500;
}

.bookmarks a {
    display: flex;
    align-items: center;
    gap: 16px;
}

.serif {
    font-family: "Liberation Serif", serif;
}

/* Assignment page */
.page {
    display: flex;
    flex-direction: column;
    flex: 1;
    background-color: #fff;
    font-family: Lato, sans-serif;
    font-size: 32px;
    line-height: 36px;
}

.page-header {
    display: grid;
    grid-template-columns: 1fr 140px 1176px;
    align-items: center;
    height: 104px;
    padding: 0 223px 4px 199px;
    border-bottom: 2px solid #eee;
    background-color: #fcfcfc;
}

.page-header h1 {
    display: flex;
    align-items: center;
    gap: 13px;
    font-size: 32px;
    font-weight: 400;
}

.saved {
    border-radius: 24px;
    background-color: #e4e2e6;
    font-size: 23px;
    line-height: 47px;
    text-align: center;
}

.page-links {
    display: flex;
    justify-content: flex-end;
    font-size: 28px;
    font-weight: 700;
    line-height: 40px;
}

.page-links a + a {
    margin-left: 25px;
    padding-left: 25px;
    border-left: 2px solid #e8e8e8;
}

.page-links .submit {
    color: #22477f;
}

.content {
    display: grid;
    grid-template-columns: 180px minmax(0, 1fr) 256px;
    flex: 1;
    padding: 0 218px 0 199px;
}

/* Sidebar */
.question-number {
    width: 164px;
    height: 188px;
    margin-top: 21px;
    border: 2px solid #eaeaea;
    border-radius: 10px;
    background-color: #fff;
    box-shadow: 8px 8px 0 -1px #fff, 9px 9px 0 0 #eaeaea;
    font-size: 138px;
    line-height: 176px;
    text-align: center;
}

.part {
    padding: 50px 0 40px 10px;
    border-bottom: 2px solid #eaeaea;
    color: #4673b3;
    font-size: 26px;
}

.progress {
    width: 132px;
    height: 12px;
    margin-top: 11px;
    border-radius: 6px;
    background-color: #f1f1f1;
    overflow: hidden;
}

.progress-fill {
    height: 12px;
    background: linear-gradient(120deg, #578dcf 32px, #4073b7 32px, #4073b7 72px, #578dcf 72px);
}

.score {
    margin-top: 28px;
    color: #22477f;
    font-size: 30px;
}

.points {
    color: #666;
    font-size: 26px;
}

.resources {
    width: 164px;
    margin-top: 58px;
    border: 2px solid #e8e8e8;
    border-radius: 0 0 12px 12px;
    color: #4673b3;
    font-size: 24px;
    line-height: 57px;
    text-align: center;
}

.resources a {
    display: block;
}

.resources a + a {
    border-top: 2px solid #e8e8e8;
}

/* Question */
.question {
    margin: 91px 105px 0 40px;
    overflow: hidden;
}

.scenario {
    margin-top: -8px;
    padding: 0 85px 52px;
    border: 2px solid #22477f;
    border-top: none;
    border-radius: 0 0 14px 14px;
}

.question h2 {
    margin-top: 38px;
    font-size: 41px;
    line-height: 44px;
}

.prompt {
    margin-top: 60px;
    white-space: nowrap;
}

.required {
    margin-top: 39px;
    font-weight: 700;
}

.question ol {
    margin-top: 32px;
    padding-left: 40px;
}

.question li::marker {
    font-weight: 700;
}

.answer {
    width: 1702px;
    max-width: 100%;
    margin: 49px 0 0 6px;
}

.instructions {
    height: 107px;
    padding: 27px 36px;
    background-color: #e0e0e0;
    color: #000;
    font: 700 26px/36px "DejaVu Sans", Verdana, sans-serif;
}

.answer-tabs {
    display: flex;
    gap: 4px;
    height: 97px;
    margin-top: 14px;
    padding-left: 4px;
    border-bottom: 2px solid #8a8a8a;
}

.answer-tabs button {
    width: 186px;
    border: 2px solid #c2c2c2;
    border-bottom: none;
    background-color: #f2f2f2;
    color: #000;
    font: 24px/28px "DejaVu Sans", Verdana, sans-serif;
}

.answer-tabs .current {
    margin-bottom: -2px;
    border-color: #8a8a8a;
    background-color: #fff;
}

.note {
    padding: 21px 20px 18px;
    background-color: #deebf8;
    color: #000;
    font: 26px/31px "DejaVu Sans", Verdana, sans-serif;
}

.warning {
    color: #a12622;
}

table {
    margin-top: 12px;
    border-collapse: collapse;
    font-family: "Liberation Sans", Arial, sans-serif;
    font-size: 26px;
}

th, td {
    width: 200px;
    height: 46px;
    border: 2px solid #767676;
}

th {
    background-color: #84aadf;
}

td {
    padding-left: 6px;
}

.label-col {
    width: 476px;
}

.entry {
    padding: 0;
    position: relative;
}

.entry input {
    display: block;
    width: 100%;
    height: 44px;
    padding: 0 14px;
    border: 3px solid #4673b3;
    font: inherit;
}

.entry::before {
    content: "";
    position: absolute;
    left: 0;
    top: 2px;
    border: 9px solid transparent;
    border-left: 11px solid #4673b3;
    border-right: none;
}

.answer-nav {
    display: flex;
    gap: 40px;
    margin: 20px 0 0 484px;
}

.answer-nav button {
    display: flex;
    align-items: center;
    justify-content: center;
    gap: 32px;
    width: 330px;
    height: 64px;
    border-radius: 4px;
    background-color: #4673b3;
    color: #fff;
    font: 700 26px/30px "Liberation Sans", Arial, sans-serif;
}

.answer-nav .previous {
    background-color: #dae4f0;
}

.check {
    align-self: start;
    margin-top: 16px;
    position: relative;
}

.check button {
    width: 256px;
    height: 60px;
    padding-bottom: 6px;
    border-radius: 5px;
    background-color: #4673b3;
    color: #fff;
    font-size: 28px;
    font-weight: 700;
}

.badge {
    position: absolute;
    right: -20px;
    top: -18px;
    width: 48px;
    border-radius: 50%;
    background-color: #22477f;
    color: #fff;
    font-size: 26px;
    font-weight: 700;
    line-height: 48px;
    text-align: center;
}

/* Footer */
.page-footer {
    display: grid;
    grid-template-columns: 1fr auto 1fr;
    height: 118px;
    padding: 12px 101px 18px 199px;
    border-top: 2px solid #f0f0f0;
    background: linear-gradient(#fff 40%, #e8e8e8);
}

.logo {
    width: 80px;
    height: 80px;
    margin-top: 8px;
    padding: 3px 0 0 5px;
    background-color: #cf3530;
    color: #fff;
    font: 700 25px/24px "Open Sans", sans-serif;
}

.pager {
    display: flex;
    border-left: 2px solid #ececec;
    font-family: "Liberation Sans", Arial, sans-serif;
    font-size: 32px;
}

.pager > * {
    display: flex;
    align-items: center;
    justify-content: center;
    padding-top: 6px;
    border-right: 2px solid #ececec;
}

.step {
    gap: 30px;
    width: 193px;
}

.step span {
    border-bottom: 3px dotted #222;
    line-height: 30px;
}

.position {
    width: 387px;
}

.linked {
    display: flex;
    justify-content: center;
    gap: 40px;
    width: 144px;
    padding: 10px 0;
    border: 2px solid #c2c2c2;
    border-radius: 6px;
    background-color: #fff;
    position: relative;
}

.linked b {
    color: #4673b3;
}

.chain {
    position: absolute;
    left: 50px;
    top: -10px;
    background-color: #fff;
}

.of {
    margin: 0 42px 0 18px;
    font-size: 30px;
}

/* Desktop and dock */
.desktop {
    position: relative;
    padding: 16px 62px 11px 63px;
    background: linear-gradient(to right, #1b1b1b 2294px, #444 2294px, #444 2296px, #33292b 2296px, #4a3c3e 2722px, #d8d8d8 2722px, #d8d8d8 2838px, #2c2326 2838px);
}

.desktop::before {
    content: "";
    position: absolute;
    left: 0;
    right: 0;
    top: -30px;
    height: 64px;
    background: linear-gradient(#000 60%, transparent);
}

.file {
    position: absolute;
    color: #555;
    line-height: 28px;
}

.file-one {
    left: 44px;
    top: -4px;
}

.file-two {
    left: 241px;
    top: -4px;
}

.file-count {
    left: 49px;
    top: 28px;
}

.dock {
    display: flex;
    position: relative;
    height: 97px;
    padding: 5px 2px 0;
    border: 3px solid #b4b4b4;
    border-radius: 28px;
    background-color: #101010;
}

.dock button {
    display: flex;
    flex: 1;
    flex-direction: column;
    align-items: center;
    min-width: 0;
    position: relative;
}

.dock svg {
    width: 76px;
    height: 76px;
}

.running::after {
    content: "";
    width: 8px;
    height: 8px;
    margin-top: 2px;
    border-radius: 50%;
    background-color: #9a9a9a;
}

.divider {
    width: 2px;
    height: 70px;
    margin: 6px 18px 0;
    background-color: #4c4c4c;
}

.notice {
    position: absolute;
    right: 2px;
    top: 0;
    width: 28px;
    border-radius: 50%;
    background-color: #e04f40;
    color: #fff;
    font-size: 17px;
    line-height: 28px;
}

.ai {
    font-family: Lato, sans-serif;
}
```
